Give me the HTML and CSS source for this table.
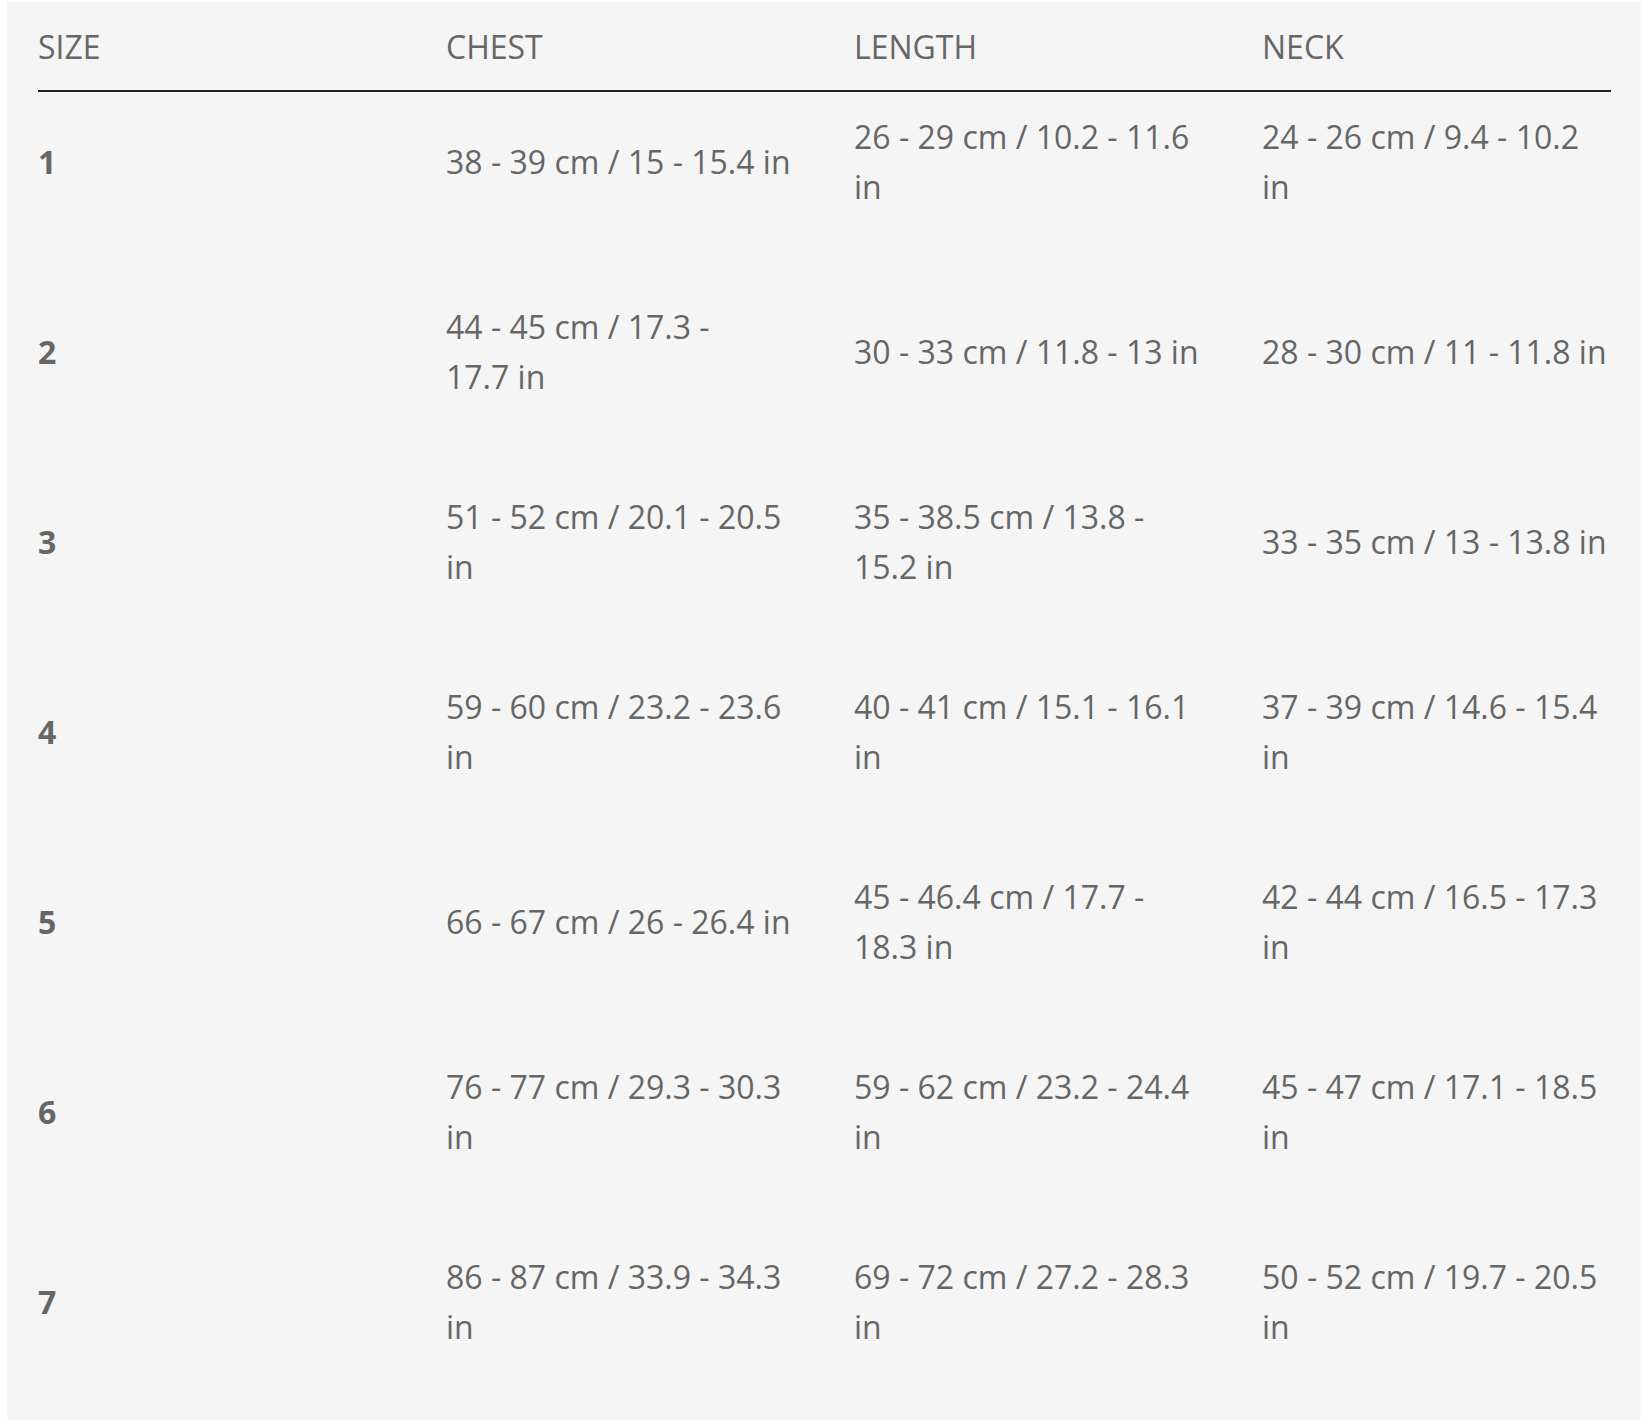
FILE: index.html
```html
<!DOCTYPE html>
<html lang="en">
<head>
<meta charset="utf-8">
<title>Size chart</title>
<link rel="stylesheet" href="styles.css">
</head>
<body>
<div class="panel">
  <table class="size-table">
    <colgroup>
      <col class="col-a"><col class="col-a"><col class="col-a"><col class="col-last">
    </colgroup>
    <thead>
      <tr><th>Size</th><th>Chest</th><th>Length</th><th>Neck</th></tr>
    </thead>
    <tbody>
      <tr><td class="size">1</td><td>38 - 39 cm / 15 - 15.4 in</td><td>26 - 29 cm / 10.2 - 11.6 in</td><td>24 - 26 cm / 9.4 - 10.2 in</td></tr>
      <tr><td class="size">2</td><td>44 - 45 cm / 17.3 - 17.7&nbsp;in</td><td>30 - 33 cm / 11.8 - 13 in</td><td>28 - 30 cm / 11 - 11.8 in</td></tr>
      <tr><td class="size">3</td><td>51 - 52 cm / 20.1 - 20.5 in</td><td>35 - 38.5 cm / 13.8 - 15.2 in</td><td>33 - 35 cm / 13 - 13.8 in</td></tr>
      <tr><td class="size">4</td><td>59 - 60 cm / 23.2 - 23.6 in</td><td>40 - 41 cm / 15.1 - 16.1 in</td><td>37 - 39 cm / 14.6 - 15.4 in</td></tr>
      <tr><td class="size">5</td><td>66 - 67 cm / 26 - 26.4 in</td><td>45 - 46.4 cm / 17.7 - 18.3 in</td><td>42 - 44 cm / 16.5 - 17.3 in</td></tr>
      <tr><td class="size">6</td><td>76 - 77 cm / 29.3 - 30.3 in</td><td>59 - 62 cm / 23.2 - 24.4 in</td><td>45 - 47 cm / 17.1 - 18.5 in</td></tr>
      <tr><td class="size">7</td><td>86 - 87 cm / 33.9 - 34.3 in</td><td>69 - 72 cm / 27.2 - 28.3 in</td><td>50 - 52 cm / 19.7 - 20.5 in</td></tr>
    </tbody>
  </table>
</div>
</body>
</html>
```
FILE: styles.css
```css
html, body {
  margin: 0;
  padding: 0;
  background: #ffffff;
}

body {
  font-family: "Open Sans", "Liberation Sans", sans-serif;
  color: #666666;
}

.panel {
  margin: 2px 3px 0 7px;
  padding: 0 30px 40px 31px;
  background: #f5f5f5;
  min-height: 1418px;
  box-sizing: border-box;
}

.size-table {
  width: 1573px;
  table-layout: fixed;
  border-collapse: collapse;
  border-spacing: 0;
}

.col-a { width: 408px; }
.col-last { width: 349px; }

.size-table th,
.size-table td {
  text-align: left;
  vertical-align: middle;
  font-size: 32px;
  line-height: 50px;
  padding: 0 59px 0 0;
}

.size-table th:last-child,
.size-table td:last-child {
  padding-right: 0;
}

.size-table th {
  font-weight: 400;
  text-transform: uppercase;
  padding-top: 20px;
  padding-bottom: 18px;
  border-bottom: 2px solid #222222;
}

.size-table td {
  padding-top: 20px;
  padding-bottom: 70px;
}

.size-table td.size {
  font-weight: 700;
}
```
